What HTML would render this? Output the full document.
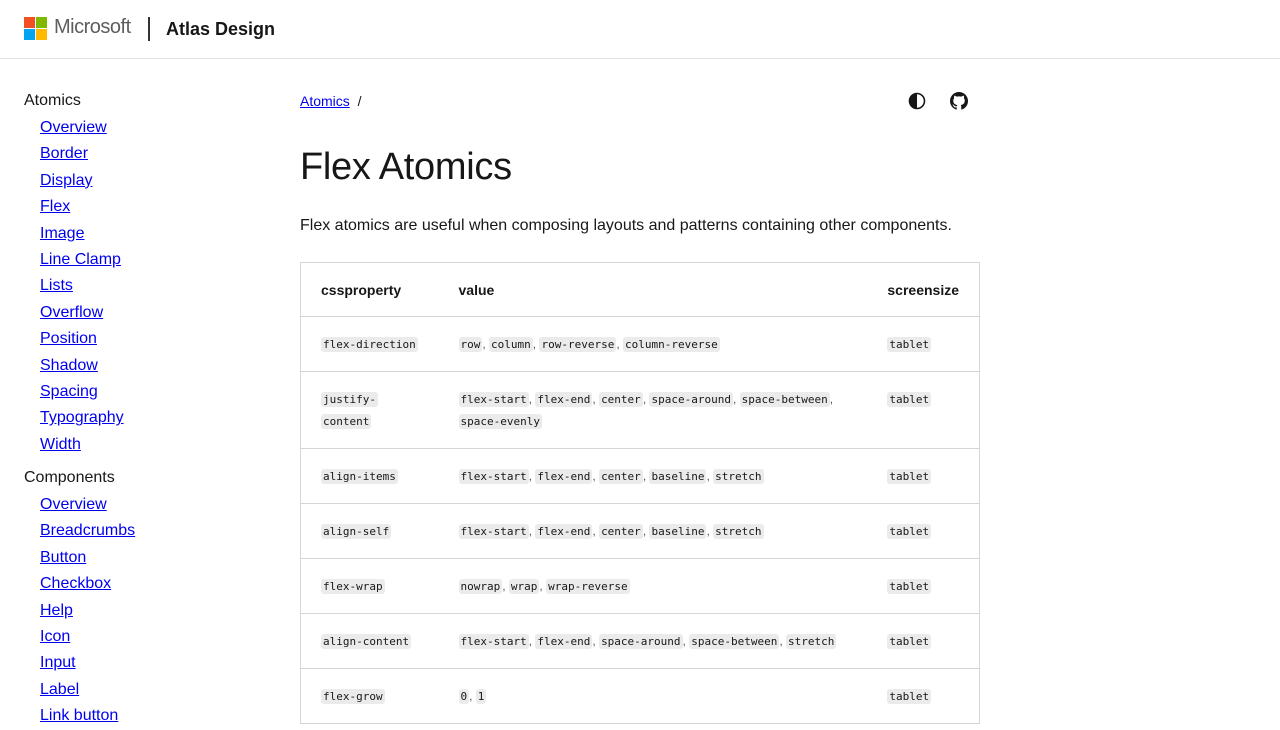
<!DOCTYPE html>
<html><head><meta charset="utf-8"><style>
*{box-sizing:border-box;margin:0;padding:0}
body{width:1280px;height:720px;overflow:hidden;background:#fff;font-family:"Segoe UI","Liberation Sans",sans-serif;color:#171717}
.hdr{height:59px;border-bottom:1px solid #e3e3e3;position:relative}
.logo{position:absolute;left:24px;top:17px;width:23px;height:23px}
.logo i{position:absolute;width:11px;height:11px}
.ms{position:absolute;left:54px;top:16px;font-size:20px;color:#5e5e5e;letter-spacing:-0.5px}
.sep{position:absolute;left:148px;top:17px;width:2px;height:24px;background:#333}
.atlas{position:absolute;left:166px;top:19px;font-size:18px;font-weight:bold;color:#171717}
.side{position:absolute;left:24px;top:88px;font-size:16px}
.side h4{font-weight:normal;font-size:16px;height:26px;line-height:26px}
.side a{display:block;margin-left:16px;color:#0000ee;text-decoration:underline;height:26.4px;line-height:28px}
.gap{height:8px}
.main{position:absolute;left:300px;top:88px;width:680px}
.bc{font-size:14px;height:26px;line-height:26px;color:#171717}
.bc a{color:#0000ee;text-decoration:underline}
h1{font-weight:normal;font-size:38px;margin-top:30px;line-height:46px;letter-spacing:-0.3px}
p.d{margin-top:24px;font-size:16px;line-height:24px}
table{margin-top:24px;border-collapse:collapse;width:680px;border:1px solid #d6d6d6;font-size:14px}
th{text-align:left;font-weight:bold;height:54px;padding:0 20px;font-size:14px}
td{padding:16px 20px 0;border-top:1px solid #d6d6d6;vertical-align:top;line-height:22px;font-size:12px;color:#555;height:55px}
tr.two td{height:77px}
td.c1{width:138px}
td.c3{width:107px}
code{font-family:"DejaVu Sans Mono","Liberation Mono",monospace;font-size:11px;background:#ebebeb;color:#171717;padding:1px 2px;border-radius:3px;line-height:14px}
.ic{position:absolute;top:92px}
</style></head><body>
<div class="hdr">
<div class="logo"><i style="left:0;top:0;background:#f25022"></i><i style="left:12px;top:0;background:#7fba00"></i><i style="left:0;top:12px;background:#00a4ef"></i><i style="left:12px;top:12px;background:#ffb900"></i></div>
<div class="ms">Microsoft</div><div class="sep"></div><div class="atlas">Atlas Design</div>
</div>
<div class="side">
<h4>Atomics</h4>
<a>Overview</a><a>Border</a><a>Display</a><a>Flex</a><a>Image</a><a>Line Clamp</a><a>Lists</a><a>Overflow</a><a>Position</a><a>Shadow</a><a>Spacing</a><a>Typography</a><a>Width</a>
<div class="gap"></div>
<h4>Components</h4>
<a>Overview</a><a>Breadcrumbs</a><a>Button</a><a>Checkbox</a><a>Help</a><a>Icon</a><a>Input</a><a>Label</a><a>Link button</a>
</div>
<svg class="ic" style="left:908px" width="18" height="18" viewBox="0 0 18 18"><circle cx="9" cy="9" r="7.5" fill="none" stroke="#171717" stroke-width="1.6"/><path d="M9 1.5A7.5 7.5 0 0 0 9 16.5Z" fill="#171717"/></svg>
<svg class="ic" style="left:950px" width="18" height="18" viewBox="0 0 16 16"><path fill="#171717" d="M8 0C3.58 0 0 3.58 0 8c0 3.54 2.29 6.53 5.47 7.59.4.07.55-.17.55-.38 0-.19-.01-.82-.01-1.49-2.010.37-2.53-.49-2.69-.94-.09-.23-.48-.94-.82-1.13-.28-.15-.68-.52-.01-.53.63-.01 1.08.58 1.23.82.72 1.21 1.87.87 2.33.66.07-.52.28-.87.51-1.07-1.78-.2-3.64-.89-3.64-3.95 0-.87.31-1.59.82-2.15-.08-.2-.36-1.02.08-2.12 0 0 .67-.21 2.2.82.64-.18 1.32-.27 2-.27.68 0 1.36.09 2 .27 1.53-1.04 2.2-.82 2.2-.82.44 1.1.16 1.92.08 2.12.51.56.82 1.27.82 2.15 0 3.07-1.870 3.75-3.65 3.95.29.25.54.73.54 1.48 0 1.07-.01 1.93-.01 2.2 0 .21.15.46.55.38A8.013 8.013 0 0016 8c0-4.42-3.58-8-8-8z"/></svg>
<div class="main">
<div class="bc"><a>Atomics</a> &nbsp;/</div>
<h1>Flex Atomics</h1>
<p class="d">Flex atomics are useful when composing layouts and patterns containing other components.</p>
<table>
<tr><th>cssproperty</th><th>value</th><th>screensize</th></tr>
<tr><td class="c1"><code>flex-direction</code></td><td><code>row</code>, <code>column</code>, <code>row-reverse</code>, <code>column-reverse</code></td><td class="c3"><code>tablet</code></td></tr>
<tr class="two"><td class="c1"><code>justify-</code><br><code>content</code></td><td><code>flex-start</code>, <code>flex-end</code>, <code>center</code>, <code>space-around</code>, <code>space-between</code>,<br><code>space-evenly</code></td><td class="c3"><code>tablet</code></td></tr>
<tr><td class="c1"><code>align-items</code></td><td><code>flex-start</code>, <code>flex-end</code>, <code>center</code>, <code>baseline</code>, <code>stretch</code></td><td class="c3"><code>tablet</code></td></tr>
<tr><td class="c1"><code>align-self</code></td><td><code>flex-start</code>, <code>flex-end</code>, <code>center</code>, <code>baseline</code>, <code>stretch</code></td><td class="c3"><code>tablet</code></td></tr>
<tr><td class="c1"><code>flex-wrap</code></td><td><code>nowrap</code>, <code>wrap</code>, <code>wrap-reverse</code></td><td class="c3"><code>tablet</code></td></tr>
<tr><td class="c1"><code>align-content</code></td><td><code>flex-start</code>, <code>flex-end</code>, <code>space-around</code>, <code>space-between</code>, <code>stretch</code></td><td class="c3"><code>tablet</code></td></tr>
<tr><td class="c1"><code>flex-grow</code></td><td><code>0</code>, <code>1</code></td><td class="c3"><code>tablet</code></td></tr>
</table>
</div>
</body></html>
